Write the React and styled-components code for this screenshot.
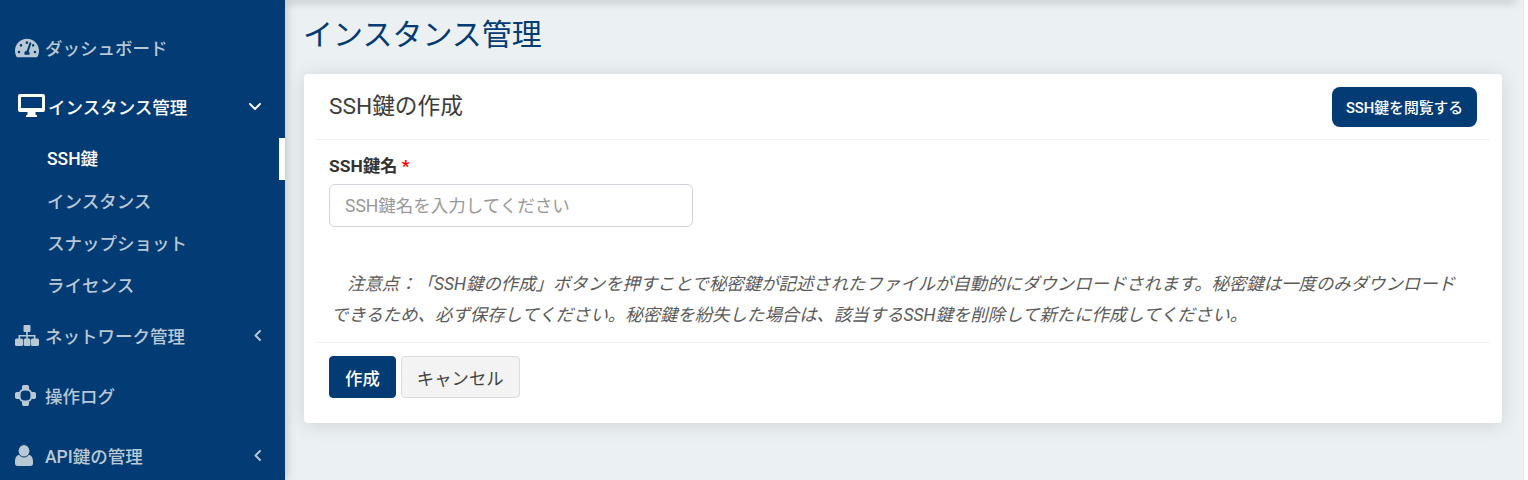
import React from "react";
import styled, { createGlobalStyle } from "styled-components";
import { FaTachometerAlt } from "react-icons/fa";

const GlobalStyle = createGlobalStyle`
  html, body {
    margin: 0;
    padding: 0;
    height: 480px;
    overflow: hidden;
    background: #fff;
    font-family: Roboto, "Noto Sans CJK JP", sans-serif;
    text-spacing-trim: space-all;
  }
  * { box-sizing: border-box; }
`;

const Page = styled.div`
  display: flex;
  height: 480px;
  overflow: hidden;
`;

const Sidebar = styled.nav`
  width: 285px;
  flex-shrink: 0;
  padding-top: 17.5px;
  background: #033b74;
  box-shadow: 0 0 10px rgba(0, 0, 0, 0.25);
  z-index: 2;
  overflow: hidden;
`;

const MenuRow = styled.div`
  display: flex;
  align-items: center;
  height: 60px;
  padding-left: ${(p) => (p.$active ? "18px" : "15px")};
  padding-right: 24px;
  padding-bottom: ${(p) => (p.$active ? "2px" : "0")};
  font-size: 17.5px;
  font-weight: 500;
  color: ${(p) => (p.$active ? "#fff" : "#b8c8d4")};
`;

const IconSlot = styled.span`
  display: flex;
  align-items: center;
  width: 30px;
  flex-shrink: 0;
  margin-top: ${(p) => (p.$active ? "-2px" : "0")};
`;

const MenuLabel = styled.span`
  flex: 1;
`;

const SubMenu = styled.div`
  display: flex;
  flex-direction: column;
`;

const SubLink = styled.div`
  display: flex;
  align-items: center;
  height: 42px;
  padding-left: 47px;
  padding-bottom: ${(p) => (p.$active ? "3px" : "0")};
  font-size: 17.5px;
  font-weight: 500;
  color: ${(p) => (p.$active ? "#fff" : "#b8c8d4")};
  border-right: 6px solid ${(p) => (p.$active ? "#fff" : "transparent")};
`;

const Main = styled.main`
  flex: 1;
  min-width: 0;
  background: #ebf0f3;
  display: flex;
  flex-direction: column;
`;

const HeaderEdge = styled.div`
  height: 0;
  margin-right: 9px;
  box-shadow: 0 0 8px 2px rgba(0, 0, 0, 0.28);
`;

const Content = styled.div`
  padding: 16px 21px 0 19px;
`;

const PageTitle = styled.h1`
  margin: 0 0 20px -1px;
  height: 38px;
  line-height: 38px;
  font-size: 30px;
  font-weight: 400;
  color: #033b74;
`;

const Card = styled.section`
  height: 349px;
  padding: 0 12px 0 13px;
  background: #fff;
  border-radius: 4px;
  box-shadow: 0 2px 20px rgba(0, 0, 0, 0.12);
`;

const CardHeader = styled.header`
  display: flex;
  align-items: center;
  justify-content: space-between;
  height: 66px;
  padding: 0 13px 0 12px;
  border-bottom: 1px solid #eef0f1;
`;

const CardTitle = styled.h2`
  margin: 0 0 5px;
  font-size: 22.7px;
  font-weight: 400;
  color: #3c3c3c;
`;

const BrowseButton = styled.button`
  height: 40px;
  width: 145px;
  padding: 0;
  border: 0;
  border-radius: 8px;
  background: #033b74;
  color: #fff;
  font: 500 14.8px Roboto, "Noto Sans CJK JP", sans-serif;
`;

const Form = styled.div`
  display: flex;
  flex-direction: column;
  height: 203px;
  padding: 15px 13px 0 12px;
  border-bottom: 1px solid #eef0f1;
`;

const FieldLabel = styled.label`
  height: 24px;
  line-height: 22px;
  margin-bottom: 5px;
  font-size: 17.4px;
  font-weight: 700;
  color: #333;
`;

const Required = styled.span`
  color: #f00;
`;

const TextInput = styled.input`
  width: 364px;
  height: 43px;
  padding: 0 15px;
  border: 1px solid #ced4da;
  border-radius: 6px;
  font: 400 17.5px Roboto, "Noto Sans CJK JP", sans-serif;
  &::placeholder { color: #999; opacity: 1; }
`;

const Note = styled.p`
  margin: 42px 0 0;
  padding: 0 14px 0 2px;
  font-size: 17.4px;
  font-style: italic;
  line-height: 31px;
  text-indent: 16px;
  color: #5a5a5a;
`;

const CardActions = styled.div`
  display: flex;
  gap: 5px;
  padding: 13px 12px 0;
`;

const ActionButton = styled.button`
  height: 42px;
  padding: 0 15px;
  border-radius: 4px;
  border: 1px solid ${(p) => (p.$primary ? "#033b74" : "#dcdcdc")};
  background: ${(p) => (p.$primary ? "#033b74" : "#f3f3f3")};
  color: ${(p) => (p.$primary ? "#fff" : "#444")};
  font: ${(p) => (p.$primary ? 500 : 400)} 17.4px Roboto, "Noto Sans CJK JP", sans-serif;
`;

const EdgeStrip = styled.div`
  width: 5px;
  flex-shrink: 0;
  background: #fff;
  border-left: 1px solid #e4e6e8;
`;

const DesktopIcon = () => (
  <svg width="27" height="23" viewBox="0 0 27 23" fill="currentColor">
    <path fillRule="evenodd" d="M2 0h23a2 2 0 0 1 2 2v14a2 2 0 0 1-2 2H2a2 2 0 0 1-2-2V2a2 2 0 0 1 2-2zM3 3v11h21V3z" />
    <path d="M9.5 18h8v2.5l1.5 1v1.5H8v-1.5l1.5-1z" />
  </svg>
);

const SitemapIcon = () => (
  <svg width="24" height="21" viewBox="0 0 24 21" fill="currentColor">
    <rect x="8.5" y="0" width="7" height="7" rx="1" />
    <path d="M11.2 7h1.6v3h7.7v4h-1.6v-2.4h-6.1V14h-1.6v-2.4H5.1V14H3.5v-4h7.7z" />
    <rect x="0" y="13.5" width="8" height="7.5" rx="1.5" />
    <rect x="8.7" y="13.5" width="6.8" height="7.5" rx="1.5" />
    <rect x="16" y="13.5" width="8" height="7.5" rx="1.5" />
  </svg>
);

const LogIcon = () => (
  <svg width="21" height="21" viewBox="0 0 21 21" fill="currentColor">
    <circle cx="10.5" cy="10.5" r="6.4" fill="none" stroke="currentColor" strokeWidth="1.8" />
    <path d="M8 0h5l1 1.500v4H7v-4zM8 21h5l1-1.500v-4H7v4zM0 8v5l1.500 1h4V7h-4zM21 8v5l-1.500 1h-4V7h4z" />
  </svg>
);

const UserIcon = () => (
  <svg width="18" height="21" viewBox="0 0 18 21" fill="currentColor">
    <ellipse cx="9" cy="5.8" rx="5.4" ry="5.8" />
    <path d="M4.2 9.800C5.400 11.500 7 12.400 9 12.400s3.600-.9 4.800-2.600c2.600.5 4.200 2.800 4.200 6.400v2.400c0 1.400-1 2.400-2.400 2.400H2.400C1 21 0 20 0 18.600v-2.400c0-3.600 1.600-5.900 4.200-6.400z" />
  </svg>
);

const AngleIcon = styled.svg`
  fill: none;
  stroke: currentColor;
  stroke-width: 1.9;
  stroke-linecap: round;
  stroke-linejoin: round;
`;

const AngleDown = () => (
  <AngleIcon width="12" height="7" viewBox="0 0 12 7">
    <path d="M1 1l5 5 5-5" />
  </AngleIcon>
);

const AngleLeft = () => (
  <AngleIcon width="7" height="11" viewBox="0 0 7 11">
    <path d="M6 1L1.500 5.500 6 10" />
  </AngleIcon>
);

const App = () => {
  return (
    <>
      <GlobalStyle />
      <Page>
        <Sidebar>
          <MenuRow>
            <IconSlot><FaTachometerAlt size={24} /></IconSlot>
            <MenuLabel>ダッシュボード</MenuLabel>
          </MenuRow>
          <MenuRow $active>
            <IconSlot $active><DesktopIcon /></IconSlot>
            <MenuLabel>インスタンス管理</MenuLabel>
            <AngleDown />
          </MenuRow>
          <SubMenu>
            <SubLink $active>SSH鍵</SubLink>
            <SubLink>インスタンス</SubLink>
            <SubLink>スナップショット</SubLink>
            <SubLink>ライセンス</SubLink>
          </SubMenu>
          <MenuRow>
            <IconSlot><SitemapIcon /></IconSlot>
            <MenuLabel>ネットワーク管理</MenuLabel>
            <AngleLeft />
          </MenuRow>
          <MenuRow>
            <IconSlot><LogIcon /></IconSlot>
            <MenuLabel>操作ログ</MenuLabel>
          </MenuRow>
          <MenuRow>
            <IconSlot><UserIcon /></IconSlot>
            <MenuLabel>API鍵の管理</MenuLabel>
            <AngleLeft />
          </MenuRow>
        </Sidebar>
        <Main>
          <HeaderEdge />
          <Content>
            <PageTitle>インスタンス管理</PageTitle>
            <Card>
              <CardHeader>
                <CardTitle>SSH鍵の作成</CardTitle>
                <BrowseButton>SSH鍵を閲覧する</BrowseButton>
              </CardHeader>
              <Form>
                <FieldLabel>SSH鍵名 <Required>*</Required></FieldLabel>
                <TextInput placeholder="SSH鍵名を入力してください" />
                <Note>
                  注意点：「SSH鍵の作成」ボタンを押すことで秘密鍵が記述されたファイルが自動的にダウンロードされます。秘密鍵は一度のみダウンロードできるため、必ず保存してください。秘密鍵を紛失した場合は、該当するSSH鍵を削除して新たに作成してください。
                </Note>
              </Form>
              <CardActions>
                <ActionButton $primary>作成</ActionButton>
                <ActionButton>キャンセル</ActionButton>
              </CardActions>
            </Card>
          </Content>
        </Main>
        <EdgeStrip />
      </Page>
    </>
  );
};

export default App;
